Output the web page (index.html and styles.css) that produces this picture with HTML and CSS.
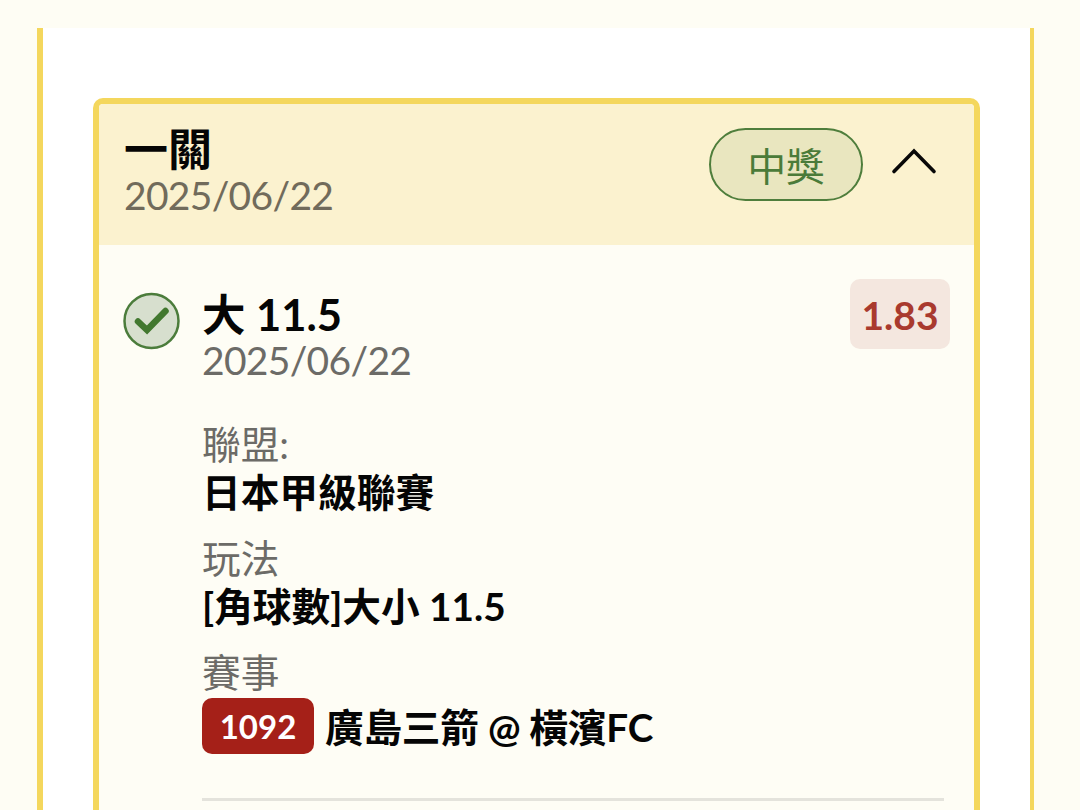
FILE: index.html
```html
<!DOCTYPE html>
<html lang="zh-Hant">
<head>
<meta charset="utf-8">
<title>一關</title>
<link rel="stylesheet" href="styles.css">
</head>
<body>
<main class="panel">
  <section class="ticket">
    <header class="ticket-head">
      <div>
        <h1 class="title">一關</h1>
        <p class="date">2025/06/22</p>
      </div>
      <div class="status">
        <span class="pill">中獎</span>
        <svg class="chevron" viewBox="0 0 46 28" fill="none" stroke="#080808" stroke-width="3.6" stroke-linecap="round"><path d="M3 24.500 23 4 43 24.500"/></svg>
      </div>
    </header>
    <article class="bet">
      <svg class="check" viewBox="0 0 58 58" fill="none"><circle cx="28.500" cy="29" r="27" fill="#d7dfce" stroke="#4b7c3b" stroke-width="2.5"/><path d="M15 29.500 24 38 42.500 19" stroke="#42782f" stroke-width="6.500" stroke-linecap="round"/></svg>
      <div class="details">
        <div class="selection">
          <div>
            <h2 class="title">大 11.5</h2>
            <p class="date">2025/06/22</p>
          </div>
          <span class="odds">1.83</span>
        </div>
        <dl class="facts">
          <div class="fact"><dt>聯盟:</dt><dd>日本甲級聯賽</dd></div>
          <div class="fact"><dt>玩法</dt><dd>[角球數]大小 11.5</dd></div>
          <div class="fact"><dt>賽事</dt><dd class="match"><span class="code">1092</span><span class="teams">廣島三箭 @ 橫濱FC</span></dd></div>
        </dl>
      </div>
    </article>
  </section>
</main>
</body>
</html>
```
FILE: styles.css
```css
* { box-sizing: border-box; }
body {
  margin: 0;
  padding: 28px 46px 0 37px;
  height: 810px;
  overflow: hidden;
  background: #fefdf4;
  color: #050505;
  font-family: Lato, "Noto Sans CJK TC", sans-serif;
}
h1, h2, p, dl, dd { margin: 0; }
.panel {
  height: 782px;
  padding: 70px 50px 0;
  background: #fff;
  border: solid #f4d75d;
  border-width: 0 4px 0 6px;
  overflow: hidden;
}
.ticket {
  height: 712px;
  border: 6px solid #f4d75d;
  border-bottom: 0;
  border-radius: 10px 10px 0 0;
  background: #fefdf5;
  overflow: hidden;
}
.ticket-head {
  display: flex;
  justify-content: space-between;
  height: 141px;
  padding: 21px 37px 0 25px;
  background: #fbf2cf;
}
.title { font-size: 43.500px; line-height: 48px; font-weight: 700; white-space: nowrap; }
.ticket-head .title { font-size: 44px; }
.date { font-size: 39px; line-height: 44px; letter-spacing: -0.7px; color: #6c6b67; }
.ticket-head .date { color: #716b5b; }
.status { display: flex; align-items: flex-start; gap: 28px; padding-top: 3px; }
.pill {
  width: 154px;
  height: 73px;
  border: 2.5px solid #4f7e3c;
  border-radius: 37px;
  background: #e9e6bf;
  color: #4b7b39;
  font-size: 38.500px;
  line-height: 73px;
  text-align: center;
}
.chevron { width: 46px; height: 28px; margin-top: 19px; }
.bet { display: flex; padding: 33px 25px 0 24px; }
.check { flex: none; width: 58px; height: 58px; margin-top: 14px; }
.details { flex: 1; margin-left: 21px; }
.selection { display: flex; justify-content: space-between; padding-top: 12px; }
.odds {
  width: 100px;
  height: 70px;
  margin-top: -11px;
  margin-right: -1px;
  border-radius: 10px;
  background: #f4e7df;
  color: #a93a2e;
  font-size: 39px;
  line-height: 73px;
  font-weight: 700;
  text-align: center;
}
.facts { margin: 38px 5px 0 0; padding-bottom: 44px; border-bottom: 3px solid #e4e3dc; }
.fact { margin-bottom: 18px; font-size: 38.700px; line-height: 48px; }
.fact:last-child { margin-bottom: 0; }
.fact dt { color: #6c6b67; }
.fact dd { font-weight: 700; white-space: nowrap; }
.fact .match { display: flex; align-items: center; gap: 11px; margin: 2px 0 0; }
.teams { letter-spacing: -0.25px; padding-top: 2px; }
.code {
  width: 112px;
  height: 56px;
  border-radius: 10px;
  background: #a52018;
  color: #fff;
  font-size: 33px;
  line-height: 57px;
  text-align: center;
}
```
